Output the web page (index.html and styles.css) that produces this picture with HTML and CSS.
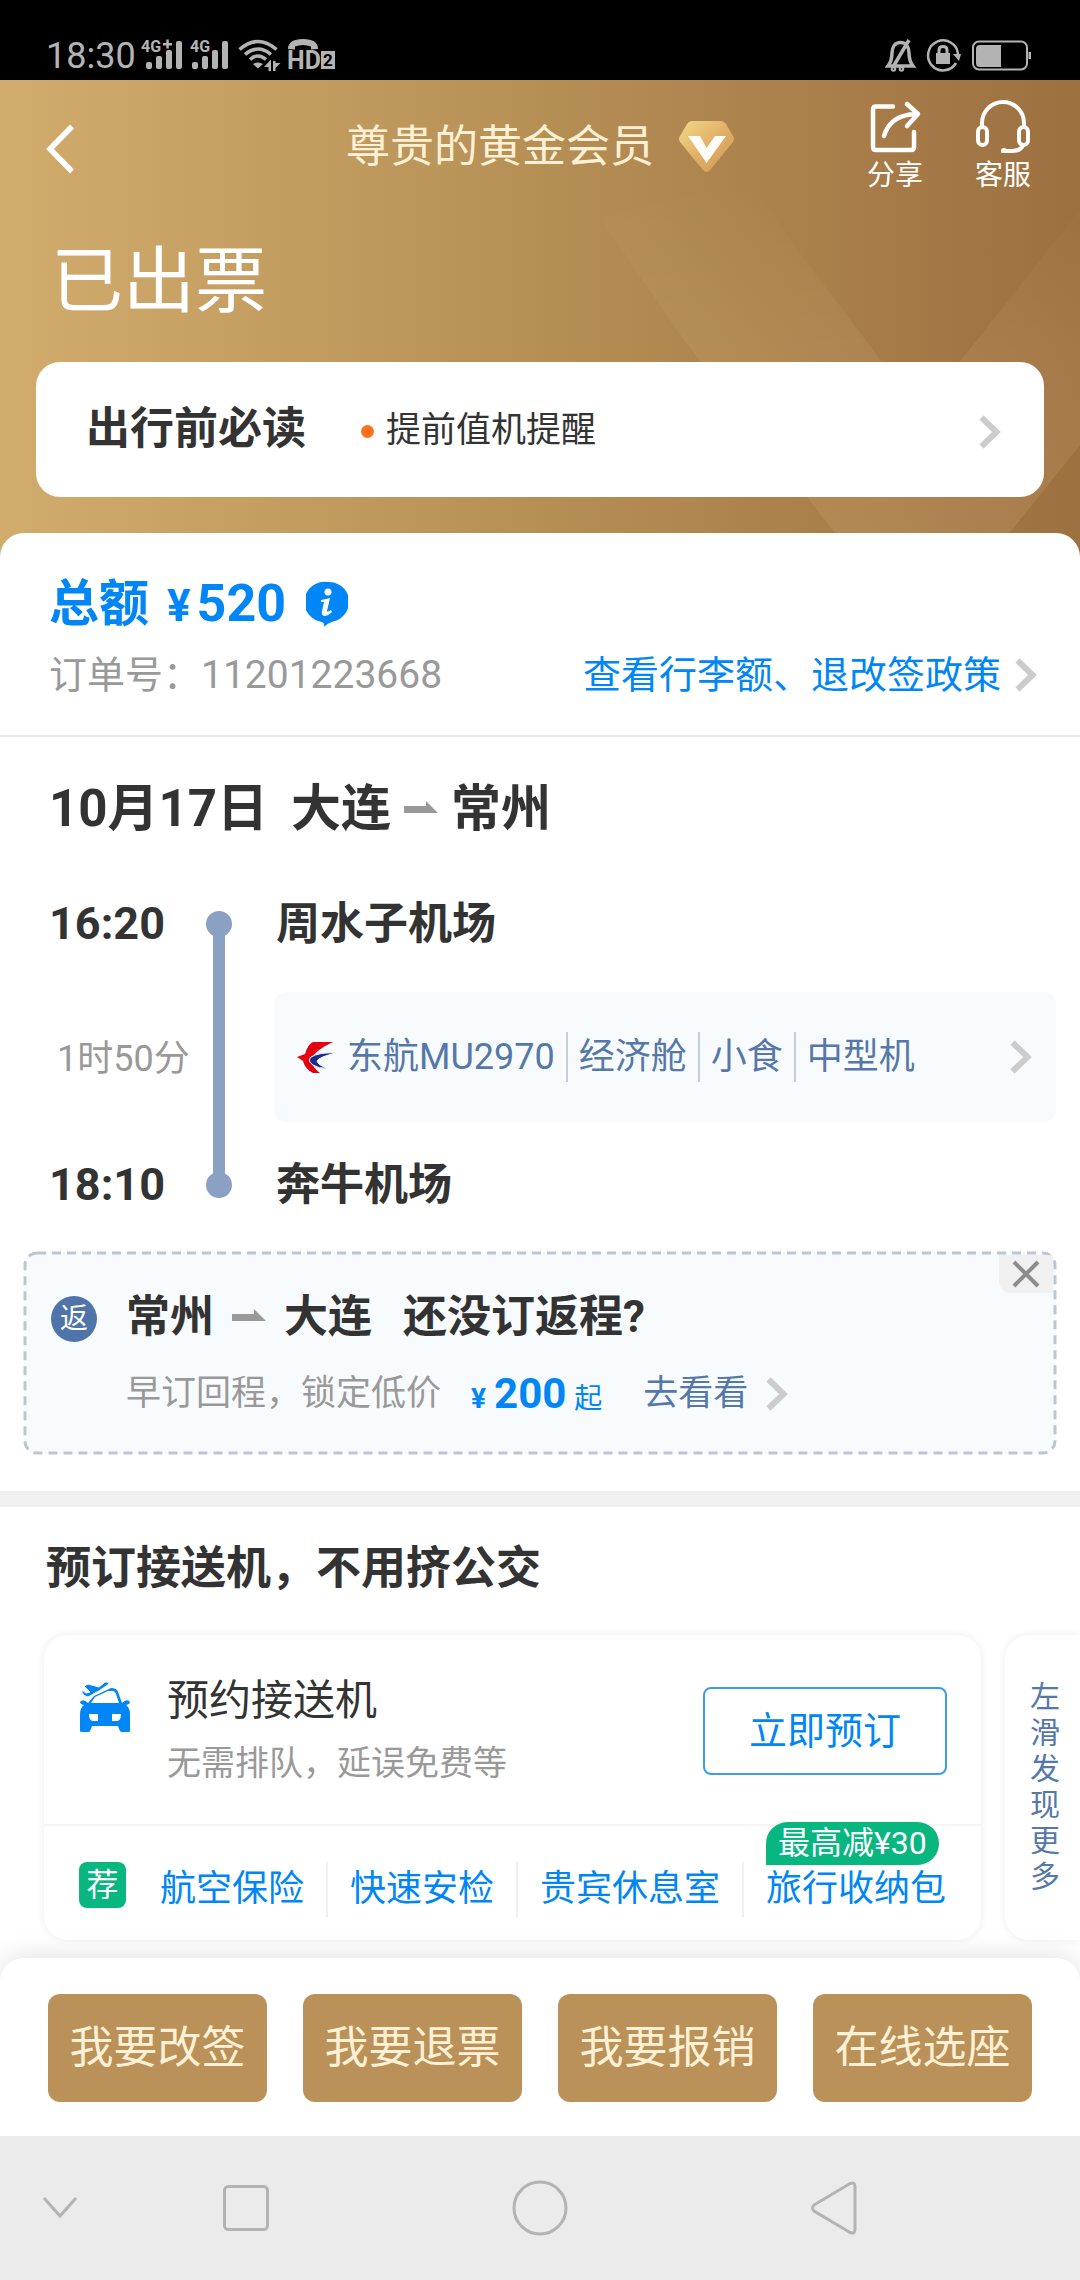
FILE: index.html
```html
<!DOCTYPE html>
<html lang="zh-CN">
<head>
<meta charset="utf-8">
<meta name="viewport" content="width=device-width, initial-scale=1">
<title>订单详情</title>
<link rel="stylesheet" href="styles.css">
</head>
<body>
<svg class="defs" aria-hidden="true">
  <symbol id="chevron" viewBox="0 0 22 34"><path d="M2.5 2.5 17.500 17 2.500 31.500" fill="none" stroke="currentColor" stroke-width="6"/></symbol>
  <symbol id="half-arrow" viewBox="0 0 34 12"><path d="M0 5h22V0l12 12H0z" fill="currentColor"/></symbol>
</svg>

<div class="status-bar">
  <div class="status-left">
    <span class="clock">18:30</span>
    <svg class="signals" width="196" height="38" viewBox="0 0 196 38" role="img" aria-label="信号">
      <g fill="currentColor">
        <text class="net" x="0" y="18">4G</text>
        <path d="M22 9h9v2.500h-9zM25.300 5.500h2.500v9h-2.500z"/>
        <rect x="5" y="28" width="6" height="7" rx="2"/><rect x="15" y="22" width="6" height="13" rx="2"/><rect x="25" y="16" width="6" height="19" rx="2"/><rect x="35" y="7" width="6" height="28" rx="2"/>
        <text class="net" x="49" y="18">4G</text>
        <rect x="51" y="28" width="6" height="7" rx="2"/><rect x="61" y="22" width="6" height="13" rx="2"/><rect x="71" y="16" width="6" height="19" rx="2"/><rect x="81" y="7" width="6" height="28" rx="2"/>
        <path d="M112 30q5-3 10 0l-5 4.500z"/>
        <path d="M123 33l7-7.500V37h-2.500v-4zM132 27v10h2.500v-3l5-5h-5v-2z"/>
        <text class="hd" x="146" y="35">HD</text>
        <path d="M147 15q0-10 15-10t15 10l-7 .5v-3q-8-3-16 0v3z"/>
        <rect x="180" y="17" width="14" height="18"/>
      </g>
      <g fill="none" stroke="currentColor" stroke-width="3.500">
        <path d="M98.500 15.500q18.500-16 37 0"/><path d="M104 20.500q13-11 26 0"/><path d="M109 25.500q8-7 16 0"/>
      </g>
      <text class="sim" x="182" y="32">2</text>
    </svg>
  </div>
  <svg class="status-right" width="148" height="34" viewBox="0 0 148 34" role="img" aria-label="静音 旋转锁定 电量">
    <g fill="none" stroke="currentColor" stroke-width="3.500">
      <path d="M3 28h25c-3-4-4-8-4-13 0-6-3-10.500-8.500-10.500S7 9 7 15c0 5-1 9-4 13zM24 2 8 29"/>
      <circle cx="8.500" cy="31" r="1"/><circle cx="16.500" cy="31" r="1"/>
      <path d="M71 25a15 15 0 1 1 2-9" stroke-width="2.500"/>
      <path d="M54 17v-5q0-3.500 4-3.500t4 3.500v5" stroke-width="3"/>
      <rect x="88" y="3.500" width="54" height="28" rx="6" stroke-width="2"/>
    </g>
    <g fill="currentColor"><rect x="51" y="15" width="14" height="11"/><path d="M68 16h8l-2 7z"/><path d="M95 7h21v22H95q-4 0-4-4V11q0-4 4-4z"/><rect x="143.500" y="14" width="2.500" height="7"/></g>
  </svg>
</div>

<header class="hero">
  <svg class="hero-mark" viewBox="0 0 480 477" aria-hidden="true">
    <defs><linearGradient id="fade" x1="0" y1="0" x2="0" y2="1"><stop offset="0" stop-color="#ffd9a8" stop-opacity="0"/><stop offset=".45" stop-color="#ffd9a8" stop-opacity=".08"/><stop offset="1" stop-color="#ffd9a8" stop-opacity=".12"/></linearGradient></defs>
    <path d="M0 138 150 100 190 160 320 332 480 130v235L390 477H254L84 260z" fill="url(#fade)"/>
  </svg>
  <nav class="top-nav">
    <a class="back" href="#" aria-label="返回"><svg width="30" height="52" viewBox="0 0 30 52"><path d="M26 3.500 4 26l22 22.500" fill="none" stroke="currentColor" stroke-width="5.500"/></svg></a>
    <div class="member">
      <span>尊贵的黄金会员</span>
      <svg width="57" height="54" viewBox="0 0 57 54" aria-hidden="true">
        <defs><linearGradient id="gem" x1="0" y1="0" x2="1" y2="1"><stop offset="0" stop-color="#f3da86"/><stop offset=".55" stop-color="#e0ac66"/><stop offset="1" stop-color="#cf9a58"/></linearGradient></defs>
        <path d="M9 4q2-3 5-3h29q3 0 5 3l7 12q2 3 0 6L32 50q-3.500 4-7 0L2 22q-2-3 0-6z" fill="url(#gem)"/>
        <path d="M10 16h12l6.500 12L37 16h11L28.500 43z" fill="#fffdf8"/>
      </svg>
    </div>
    <div class="actions">
      <a href="#"><svg width="54" height="54" viewBox="0 0 54 54" fill="none" stroke="currentColor" stroke-width="4.500" stroke-linecap="round" stroke-linejoin="round"><path d="M25 7.500H8q-3 0-3 3V48q0 3 3 3h35q3 0 3-3V33"/><path d="M16 37Q22 16 48 15M39 5l11 10-11 12"/></svg><span>分享</span></a>
      <a href="#"><svg width="54" height="54" viewBox="0 0 54 54" fill="none" stroke="currentColor" stroke-width="4" stroke-linecap="round" stroke-linejoin="round"><path d="M6 28V24a21 21 0 0 1 42 0v4"/><rect x="2" y="28" width="9" height="18" rx="4.500"/><rect x="43" y="28" width="9" height="18" rx="4.500"/><path d="M47 46q-2 6-11 6h-8"/><circle cx="28" cy="52" r="1"/></svg><span>客服</span></a>
    </div>
  </nav>
  <h1>已出票</h1>
  <a class="notice" href="#">
    <strong>出行前必读</strong>
    <span class="notice-item">提前值机提醒</span>
    <svg class="chevron"><use href="#chevron"/></svg>
  </a>
</header>

<main class="sheet">
  <section class="summary">
    <div class="total">
      <span>总额</span><span class="yen">¥</span><span class="amount">520</span>
      <svg width="42" height="46" viewBox="0 0 42 46" role="img" aria-label="说明"><path d="M21 1a20 20 0 0 1 6 39.500Q22 42 18 46q1-4-2-5A20 20 0 0 1 21 1z" fill="currentColor"/><circle cx="22" cy="11" r="3.500" fill="#fff"/><path d="M15 19q6-1 9-2l-3 13q0 2 4-1l1 2q-4 4-8 4-3-1-2-5l2-9h-3z" fill="#fff"/></svg>
    </div>
    <div class="order">
      <span>订单号：<span class="order-no">11201223668</span></span>
      <a href="#">查看行李额、退改签政策<svg class="chevron"><use href="#chevron"/></svg></a>
    </div>
  </section>

  <section class="trip">
    <h2 class="route"><span class="date">10月17日</span><span>大连</span><svg class="arrow"><use href="#half-arrow"/></svg><span>常州</span></h2>
    <div class="timeline">
      <div class="time">16:20</div>
      <div class="line"></div>
      <div class="airport">周水子机场</div>
      <div class="duration">1时50分</div>
      <a class="flight" href="#">
        <svg width="39" height="33" viewBox="0 0 39 33" aria-hidden="true"><path d="M36 1H16Q11 3 8 13L0 16l6 4q2 8 10 12h7q-8-6-9-13 3-9 22-18z" fill="#e50012"/><path d="M39 12Q22 11 14 16q-4 4 2 8 6 4 14 3-9-3-10-7 2-4 19-8z" fill="#1c2a8c" stroke="#f8fbfe" stroke-width="1"/></svg>
        <ul><li>东航MU2970</li><li>经济舱</li><li>小食</li><li>中型机</li></ul>
        <svg class="chevron"><use href="#chevron"/></svg>
      </a>
      <div class="time">18:10</div>
      <div class="airport">奔牛机场</div>
    </div>
    <div class="return">
      <svg class="dashes" aria-hidden="true"><rect/></svg>
      <span class="return-badge">返</span>
      <div class="return-body">
        <h3><span>常州</span><svg class="arrow"><use href="#half-arrow"/></svg><span>大连</span><span class="ask">还没订返程?</span></h3>
        <p><span>早订回程，锁定低价</span><span class="price"><b class="price-yen">¥</b><b class="price-num">200</b><span>起</span></span><a href="#">去看看<svg class="chevron"><use href="#chevron"/></svg></a></p>
      </div>
      <button class="close" type="button" aria-label="关闭"><svg width="28" height="28" viewBox="0 0 28 28"><path d="M2 2l24 24M26 2 2 26" stroke="currentColor" stroke-width="4"/></svg></button>
    </div>
  </section>

  <section class="services">
    <h2>预订接送机，不用挤公交</h2>
    <div class="cards">
      <article class="card">
        <div class="card-top">
          <svg class="car" width="50" height="50" viewBox="0 0 50 50" aria-hidden="true">
            <path d="M14 14 31 6q6 0 7 4l4 11q5-5 8-1 0 2-4 3 4 3 4 9v16q0 3-4 3h-3q-3 0-5-7H12q-2 7-5 7H4q-4 0-4-3V32q0-6 4-9-4-1-4-3 3-4 8 1z" fill="currentColor"/>
            <path d="M15 15 28 9h5q2 0 3 3l3 9H11z" fill="#fff"/>
            <path d="M9 32h9v7h-5q-4 0-4-7zM41 32h-9v7h5q4 0 4-7z" fill="#fff"/>
            <path d="M1 9q2-1 5 2l4-1-6-6 4-2 11 3 6-5q4-1 4 2-9 7-21 13-4 0-7-6z" fill="currentColor" stroke="#fff" stroke-width="1"/>
          </svg>
          <div class="card-text"><h3>预约接送机</h3><p>无需排队，延误免费等</p></div>
          <button class="book" type="button">立即预订</button>
        </div>
        <div class="card-bottom">
          <span class="rec">荐</span>
          <ul><li><a href="#">航空保险</a></li><li><a href="#">快速安检</a></li><li><a href="#">贵宾休息室</a></li><li><a href="#">旅行收纳包</a><span class="promo">最高减¥30</span></li></ul>
        </div>
      </article>
      <aside class="more">左滑发现更多</aside>
    </div>
  </section>
</main>

<footer class="bottom">
  <button type="button">我要改签</button>
  <button type="button">我要退票</button>
  <button type="button">我要报销</button>
  <button type="button">在线选座</button>
</footer>
<nav class="system-nav">
  <svg width="34" height="22" viewBox="0 0 34 22"><path d="M1 1l16 18L33 1"/></svg>
  <svg width="46" height="46" viewBox="0 0 46 46"><rect x="1.500" y="1.500" width="43" height="43" rx="4"/></svg>
  <svg width="56" height="56" viewBox="0 0 56 56"><circle cx="28" cy="28" r="26"/></svg>
  <svg width="46" height="54" viewBox="0 0 46 54"><path d="M3 24 39 2.500q5-2 5 3v43q0 5-5 3L3 30q-3-3 0-6z"/></svg>
</nav>
</body>
</html>
```
FILE: styles.css
```css
* { box-sizing: border-box; margin: 0; padding: 0; }
body {
  display: flex;
  flex-direction: column;
  min-height: 100vh;
  overflow-x: hidden;
  background: #fff;
  color: #333;
  font-family: Roboto, "Noto Sans CJK SC", sans-serif;
}
a { color: inherit; text-decoration: none; }
ul { display: flex; list-style: none; }
svg { display: block; flex: none; }
button { border: 0; font-family: inherit; cursor: pointer; }
.defs { display: none; }
.chevron { width: 22px; height: 34px; color: #ccc; }
.arrow { width: 34px; height: 12px; color: #999; }

/* status bar */
.status-bar {
  display: flex;
  justify-content: space-between;
  padding: 34px 47px 8px 46px;
  height: 80px;
  background: #000;
  color: #b3b3b3;
}
.status-left { display: flex; }
.clock { font-size: 36px; line-height: 44px; margin-right: 5px; }
.signals { overflow: visible; }
.net { font-size: 16px; font-weight: 700; }
.hd { font-size: 25px; font-weight: 700; }
.sim { font-size: 17px; font-weight: 700; }
.status-right { margin-top: 4px; }

/* gold header */
.hero {
  position: relative;
  overflow: hidden;
  padding: 0 36px 60px;
  background: linear-gradient(90deg, #d2ac6d, #b68f55 50%, #9d7040);
  color: #fff;
}
.hero-mark { position: absolute; right: 0; top: 0; width: 480px; height: 477px; }
.top-nav {
  position: relative;
  display: grid;
  grid-template-columns: 1fr auto 1fr;
  align-items: center;
  height: 132px;
  padding: 2px 13px 0 10px;
}
.back { margin-top: 4px; }
.member { display: flex; align-items: center; gap: 24px; padding-left: 4px; color: #fff0d6; font-size: 44px; line-height: 60px; }
.actions { display: flex; justify-content: flex-end; gap: 52px; font-size: 28px; line-height: 38px; }
.actions svg { margin: 0 auto 4px; }
.hero h1 { position: relative; padding: 20px 15px 30px; font-size: 72px; font-weight: 400; line-height: 100px; }
.notice {
  position: relative;
  display: flex;
  align-items: center;
  padding: 37px 43px 38px 50px;
  border-radius: 24px;
  background: #fff;
  color: #333;
  line-height: 60px;
}
.notice strong { font-size: 44px; }
.notice-item { display: flex; align-items: center; gap: 12px; margin-left: 55px; padding-top: 4px; font-size: 35px; line-height: 56px; }
.notice-item::before { content: ""; width: 13px; height: 13px; border-radius: 50%; background: #ff6f1e; }
.notice .chevron { margin: 6px 0 0 auto; }

/* white sheet */
.sheet { position: relative; flex: 1; margin-top: -24px; border-radius: 24px 24px 0 0; background: #fff; }
.summary { padding: 36px 43px 30px 49px; border-bottom: 2px solid #e6e6e6; }
.total { display: flex; align-items: baseline; height: 70px; color: #0086f6; font-size: 50px; font-weight: 700; line-height: 70px; }
.total .yen { margin-left: 18px; font-size: 44px; }
.total .amount { margin-left: 6px; font-size: 52px; }
.total svg { margin-left: 20px; align-self: center; }
.order { display: flex; justify-content: space-between; margin-top: 6px; color: #999; font-size: 38px; line-height: 60px; }
.order-no { font-size: 39px; line-height: 1; }
.order a { display: flex; align-items: center; gap: 14px; color: #0086f6; }

.trip { padding: 42px 24px 37px; }
.route { display: flex; align-items: center; gap: 13px; padding-left: 25px; font-size: 50px; line-height: 60px; }
.route .date { margin-right: 10px; font-size: 51px; }
.route .arrow, .return .arrow { margin-bottom: 4px; }
.timeline {
  display: grid;
  grid-template-columns: 157px 26px 1fr;
  row-gap: 33px;
  margin-top: 55px;
  padding-left: 25px;
}
.time { grid-column: 1; font-size: 45px; font-weight: 700; line-height: 60px; }
.line {
  grid-column: 2;
  grid-row: 1 / 4;
  display: flex;
  flex-direction: column;
  align-items: center;
  margin: 17px 0;
  background: linear-gradient(#8aa1c4, #8aa1c4) center / 12px calc(100% - 26px) no-repeat;
}
.line::before, .line::after { content: ""; width: 26px; height: 26px; border-radius: 50%; background: #8aa1c4; }
.line::after { margin-top: auto; }
.airport { grid-column: 3; padding-left: 44px; font-size: 44px; font-weight: 700; line-height: 60px; }
.duration { grid-column: 1; align-self: center; padding: 8px 0 0 8px; color: #999; font-size: 36px; line-height: 50px; white-space: nowrap; }
.flight {
  grid-column: 3;
  display: flex;
  align-items: center;
  margin: 5px 0 0 42px;
  padding: 40px 24px 40px 23px;
  border-radius: 12px;
  background: #f8fbfe;
  color: #5678a8;
  font-size: 36px;
  line-height: 50px;
}
.flight li { padding: 0 11px; white-space: nowrap; }
.flight li + li { border-left: 2px solid #c5cfdb; }
.flight .chevron { margin-left: auto; }

.return {
  position: relative;
  display: flex;
  align-items: flex-start;
  margin-top: 37px;
  padding: 35px 27px;
  border-radius: 12px;
  background: #f8fbfe;
}
.dashes { position: absolute; inset: 0; width: 100%; height: 100%; overflow: visible; }
.dashes rect {
  x: 1px;
  y: 1px;
  width: calc(100% - 2px);
  height: calc(100% - 2px);
  rx: 12px;
  fill: none;
  stroke: #bcc6d2;
  stroke-width: 3px;
  stroke-dasharray: 9 6;
}
.return-badge {
  position: relative;
  flex: none;
  width: 46px;
  margin: 9px 29px 0 0;
  border-radius: 50%;
  background: #4f74a9;
  color: #fff;
  font-size: 28px;
  line-height: 46px;
  text-align: center;
}
.return-body { position: relative; }
.return h3 { display: flex; align-items: center; gap: 18px; font-size: 44px; line-height: 60px; }
.return .ask { margin-left: 13px; }
.return p { display: flex; height: 50px; margin-top: 22px; color: #999; font-size: 35px; line-height: 50px; }
.price { display: flex; align-items: baseline; margin-left: 30px; color: #0086f6; font-size: 28px; }
.price-num { margin: 0 8px; font-size: 42px; }
.return p a { display: flex; align-items: center; gap: 18px; margin-left: 41px; color: #5678a8; }
.close {
  position: absolute;
  top: 3px;
  right: 3px;
  display: grid;
  place-items: center;
  width: 54px;
  height: 38px;
  border-radius: 0 0 0 12px;
  background: #f0f0f0;
  color: #8c8c8c;
}

/* extra services */
.services { border-top: 16px solid #f0f0f0; padding: 32px 0 18px 44px; }
.services > h2 { padding-left: 2px; font-size: 45px; line-height: 60px; }
.cards { display: flex; gap: 24px; margin-top: 36px; }
.card, .more { background: #fff; box-shadow: 0 0 10px rgba(0, 0, 0, .07); }
.card { flex: 1; border-radius: 24px; }
.card-top { display: flex; align-items: flex-start; height: 191px; padding: 41px 34px 0 36px; border-bottom: 2px solid #f5f5f5; }
.car { margin-top: 6px; color: #0086f6; }
.card-text { margin: 0 auto 0 37px; }
.card-text h3 { font-size: 42px; font-weight: 400; line-height: 50px; }
.card-text p { margin-top: 17px; color: #999; font-size: 34px; line-height: 40px; }
.book {
  margin-top: 11px;
  padding: 0 44px;
  border: 2px solid #3b9bf3;
  border-radius: 8px;
  background: #fff;
  color: #0086f6;
  font-size: 38px;
  line-height: 84px;
}
.card-bottom { display: flex; align-items: flex-start; padding: 36px 34px 23px 35px; }
.rec { width: 47px; margin-right: 12px; border-radius: 8px; background: #07b77f; color: #fff; font-size: 32px; line-height: 46px; text-align: center; }
.card-bottom ul { color: #0086f6; font-size: 36px; line-height: 55px; white-space: nowrap; }
.card-bottom li { position: relative; padding: 0 22px; }
.card-bottom li:last-child { padding-right: 0; }
.card-bottom li + li { border-left: 2px solid #f0f0f0; }
.promo {
  position: absolute;
  left: 22px;
  top: -40px;
  padding: 0 12px;
  border-radius: 22px 22px 22px 0;
  background: #07b77f;
  color: #fff;
  font-size: 32px;
  line-height: 43px;
}
.more {
  width: 75px;
  padding: 44px 20px 0 25px;
  border-radius: 24px 0 0 24px;
  color: #5678a8;
  font-size: 30px;
  line-height: 36px;
}

/* bottom bars */
.bottom {
  position: relative;
  display: grid;
  grid-template-columns: repeat(4, 1fr);
  gap: 36px;
  padding: 36px 48px 34px;
  border-radius: 24px 24px 0 0;
  background: #fff;
  box-shadow: 0 -4px 24px rgba(0, 0, 0, .1);
}
.bottom button { border-radius: 12px; background: #ba9158; color: #fff0d6; font-size: 44px; line-height: 108px; }
.system-nav {
  position: relative;
  display: grid;
  grid-template-columns: 120fr 252fr 336fr 252fr 120fr;
  place-items: center;
  height: 144px;
  background: #ebebeb;
  fill: none;
  stroke: #b3b3b3;
  stroke-width: 3px;
}
```
